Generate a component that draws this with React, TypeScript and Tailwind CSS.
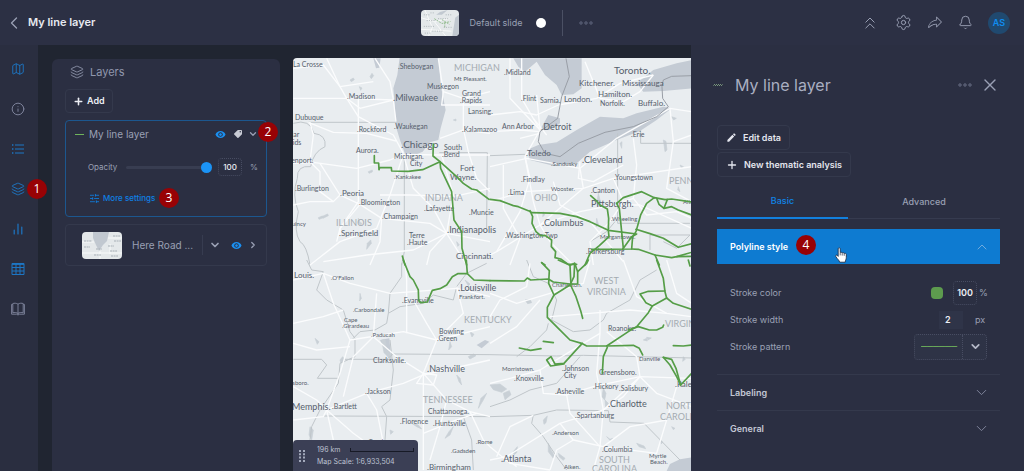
import { useState } from "react";
import {
  Bell,
  ChevronDown,
  ChevronLeft,
  ChevronRight,
  ChevronUp,
  ChevronsUp,
  Info,
  Layers,
  Map as MapIcon,
  Plus,
  Settings,
  SlidersHorizontal,
  X,
} from "lucide-react";
import { FaTag } from "react-icons/fa";
import { MdEdit, MdVisibility } from "react-icons/md";
import { PiShareFatLight } from "react-icons/pi";

type Label = [text: string, x: number, y: number, size: number, dot?: "l" | "r"];

const cities: Label[] = [
  ["La Crosse", 293, 67, 7],
  ["Sheboygan", 400, 69, 7, "l"],
  ["Mt Pleasant", 454, 81, 6, "r"],
  ["Muskegon", 427, 89, 7],
  ["Madison", 349, 99, 7, "l"],
  ["Milwaukee", 395, 101, 9, "l"],
  ["Grand", 462, 96, 7],
  ["Rapids", 462, 103, 7, "l"],
  ["Lansing", 468, 114, 7, "r"],
  ["Dubuque", 295, 120, 7],
  ["Waukegan", 396, 129, 7, "l"],
  ["Rockford", 359, 132, 7, "l"],
  ["Kalamazoo", 464, 132, 7, "l"],
  ["Cedar", 281, 137, 7],
  ["Rapids", 281, 145, 7],
  ["Chicago", 403, 148, 10, "l"],
  ["South", 444, 150, 7],
  ["Bend", 444, 157, 7, "l"],
  ["Aurora", 356, 153, 7, "r"],
  ["Michigan", 394, 159, 7, "r"],
  ["City", 410, 166, 7],
  ["Davenport", 279, 163, 7, "r"],
  ["Fort", 460, 171, 8],
  ["Wayne", 450, 180, 8, "r"],
  ["Kankakee", 396, 179, 6, "l"],
  ["Burlington", 297, 191, 7, "l"],
  ["Peoria", 342, 196, 8, "l"],
  ["Bloomington", 361, 205, 7, "l"],
  ["Lafayette", 426, 211, 7, "l"],
  ["Muncie", 471, 215, 7, "l"],
  ["Champaign", 384, 219, 7, "l"],
  ["Quincy", 287, 226, 6],
  ["Springfield", 341, 236, 8, "l"],
  ["Indianapolis", 449, 233, 9, "l"],
  ["Terre", 409, 238, 7],
  ["Haute", 409, 245, 7, "l"],
  ["Cincinnati", 456, 259, 8, "r"],
  ["Midland", 506, 75, 7, "l"],
  ["Toronto", 614, 74, 10, "r"],
  ["Kitchener", 579, 86, 8, "r"],
  ["Mississauga", 622, 86, 8],
  ["Hamilton", 598, 97, 8, "r"],
  ["Flint", 523, 101, 7, "l"],
  ["Sarnia", 540, 103, 7, "r"],
  ["London", 564, 102, 8, "r"],
  ["Norfolk", 600, 106, 7, "r"],
  ["Buffalo", 638, 106, 8, "r"],
  ["Ann Arbor", 502, 129, 7],
  ["Detroit", 543, 130, 9, "l"],
  ["Erie", 633, 137, 7, "l"],
  ["Toledo", 528, 156, 8, "l"],
  ["Sandusky", 553, 166, 6, "l"],
  ["Cleveland", 584, 163, 9, "l"],
  ["Findlay", 523, 182, 7, "l"],
  ["Youngstown", 616, 180, 7, "l"],
  ["Wooster", 551, 191, 6, "r"],
  ["Canton", 593, 193, 7, "l"],
  ["Lima", 510, 195, 7, "l"],
  ["Pittsburgh", 591, 207, 9, "r"],
  ["Wheeling", 613, 221, 6, "l"],
  ["Columbus", 544, 226, 9, "l"],
  ["Altoona", 683, 204, 6],
  ["Washington Twp", 507, 238, 7, "l"],
  ["Morgantown", 600, 239, 6, "r"],
  ["Parkersburg", 588, 254, 7, "l"],
  ["St Louis", 285, 278, 8, "r"],
  ["O'Fallon", 333, 280, 6, "l"],
  ["Louisville", 460, 291, 9, "l"],
  ["Frankfort", 459, 299, 6, "r"],
  ["Evansville", 404, 303, 7, "l"],
  ["Carbondale", 355, 312, 6, "l"],
  ["Cape", 344, 322, 6],
  ["Girardeau", 344, 328, 6, "l"],
  ["Paducah", 373, 337, 6, "l"],
  ["Bowling", 439, 334, 7],
  ["Green", 439, 341, 7, "l"],
  ["Clarksville", 373, 363, 7, "r"],
  ["Nashville", 429, 372, 9, "l"],
  ["Jonesboro", 280, 385, 6, "r"],
  ["Jackson", 367, 394, 7, "l"],
  ["Memphis", 292, 410, 9, "r"],
  ["Bartlett", 334, 409, 7, "l"],
  ["Chattanooga", 428, 414, 7, "r"],
  ["Florence", 402, 424, 7, "l"],
  ["Huntsville", 435, 426, 7, "l"],
  ["Tupelo", 369, 443, 6],
  ["Rome", 478, 444, 6, "l"],
  ["Gadsden", 453, 453, 6, "l"],
  ["Birmingham", 429, 470, 8, "l"],
  ["Charleston", 552, 287, 6, "r"],
  ["Roanoke", 608, 331, 7, "r"],
  ["Danville", 639, 361, 6],
  ["Morristown", 502, 371, 6, "r"],
  ["Johnson", 564, 371, 7, "l"],
  ["City", 564, 378, 7],
  ["Greensboro", 599, 375, 7, "r"],
  ["Knoxville", 516, 381, 7, "l"],
  ["Hickory", 595, 389, 7, "l"],
  ["Salisbury", 621, 391, 7, "l"],
  ["Asheville", 557, 394, 7, "l"],
  ["Raleigh", 677, 387, 8, "l"],
  ["Charlotte", 610, 407, 9, "l"],
  ["Spartanburg", 577, 418, 7, "l"],
  ["Anderson", 554, 435, 6, "l"],
  ["Columbia", 604, 452, 7, "l"],
  ["Myrtle", 649, 458, 6],
  ["Beach", 650, 464, 6, "r"],
  ["Atlanta", 503, 462, 9, "l"],
  ["Aiken", 564, 469, 6, "r"],
];

const states: Label[] = [
  ["MICHIGAN", 454, 71, 9],
  ["INDIANA", 425, 201, 9],
  ["ILLINOIS", 336, 226, 9],
  ["OHIO", 534, 201, 9],
  ["PENNSYLVANIA", 669, 184, 9],
  ["WEST", 594, 284, 9],
  ["VIRGINIA", 587, 295, 9],
  ["KENTUCKY", 464, 323, 9],
  ["VIRGINIA", 665, 327, 9],
  ["TENNESSEE", 423, 403, 9],
  ["NORTH", 666, 409, 9],
  ["CAROLINA", 660, 420, 9],
  ["SOUTH", 599, 463, 9],
  ["CAROLINA", 592, 472, 9],
];

const quadrants = [
  {
    origin: "translate(290 55) scale(0.3333)",
    water: [
      "M330 0 L445 0 L452 90 L467 165 L452 220 L445 255 L420 262 L398 290 L380 298 L345 296 L330 255 L318 215 L314 150 L310 100 L322 60 Z",
      "M250 10 L272 10 L268 38 L258 40 Z",
    ],
    border: [
      "M55 202 L318 202",
      "M343 296 L343 590 L335 630",
      "M448 293 L592 293 L590 520",
      "M10 205 Q60 190 72 235 Q110 240 105 275 Q70 290 62 335 Q20 330 22 370 Q5 420 25 470 Q10 530 30 560 Q50 570 60 630",
    ],
    roads: [
      "M10 130 L170 130 L310 135 L318 200",
      "M110 10 L150 95 L170 130 L205 185 L310 240 L340 295",
      "M55 202 L130 232 L230 235 L318 258",
      "M10 325 L70 322 L200 340 L300 315 L340 298 L450 300 L600 300",
      "M60 202 L70 240 L60 320 L90 350 L90 410 L130 440",
      "M205 130 L205 440 L150 520 L140 560",
      "M90 325 L150 420 L210 448 L275 490 L420 505 L470 535 L600 560",
      "M340 298 L300 420 L260 520 L150 560 L60 630",
      "M340 298 L370 400 L430 460 L470 535 L530 630",
      "M470 535 L370 585 L230 600 L100 620",
      "M470 535 L490 420 L455 300",
      "M270 420 L360 420 L490 425 L600 400",
      "M445 10 L460 110 L455 150 L600 150",
      "M460 110 L520 130 L600 110",
      "M450 250 L520 225 L600 235",
      "M520 130 L520 220 L535 290 L560 370",
      "M255 10 L300 80 L310 135",
      "M10 40 L100 30 L150 95 L250 80",
      "M10 450 L60 440 L130 440 L150 420",
      "M210 448 L150 520 L150 540",
      "M275 490 L270 560 L240 630",
      "M560 370 L600 410",
      "M470 535 L420 590 L410 630",
      "M310 135 L210 160 L170 130",
    ],
    ponds: [
      "M180 75 l10 -6 l3 5 l-9 6 Z",
      "M208 95 l8 4 l-4 7 Z",
      "M240 65 l6 -10 l5 7 l-7 9 Z",
      "M95 485 l18 -8 l2 5 l-16 8 Z",
      "M232 565 l10 -10 l2 10 l-14 18 Z",
      "M85 488 l12 -5 l3 5 l-13 5 Z",
      "M205 490 l5 12 l6 3 l-3 5 l-8 -7 Z",
      "M490 195 l8 -3 l0 6 Z",
      "M500 560 l8 10 l-5 4 Z",
      "M235 350 l12 -5 l0 6 l-10 4 Z",
    ],
    lines: [
      "M253 302 L253 324 L266 324 L267 344 L269 338 L304 338 L305 348 L355 349 L398 344 L450 320 L452 340 L485 410 L492 495 L515 530 L516 580 L530 630",
      "M430 267 L429 303 L450 320 L500 365 L520 385 L545 402 L560 405 L597 433",
      "M345 630 L337 603",
    ],
  },
  {
    origin: "translate(490 55) scale(0.3333)",
    water: [
      "M70 10 L275 10 L275 100 L250 118 L215 120 L200 90 L165 60 L140 20 L105 50 L85 35 Z",
      "M150 225 L175 180 L210 190 L210 205 L180 225 Z",
      "M145 270 L200 262 L260 225 L330 185 L400 190 L440 175 L520 155 L545 160 L500 195 L450 228 L380 255 L300 290 L260 325 L190 332 L120 315 L110 285 Z",
      "M440 85 L490 45 L560 25 L605 15 L605 100 L520 108 L460 110 Z",
    ],
    border: [
      "M383 235 L383 450",
      "M452 225 L452 265 L605 265",
      "M0 302 L105 298",
      "M383 450 L383 505 L600 505",
      "M300 560 L350 530 L375 500",
      "M480 585 L480 540 L600 540",
      "M600 540 L560 580 L520 560",
    ],
    national:
      "M228 10 L238 65 L215 125 L203 190 L150 230 L145 260 L165 295 L210 305 L265 265 L345 232 L430 215 L500 185 L535 155 L518 130 L516 95 L520 75 L545 64 L605 62",
    roads: [
      "M0 180 L90 170 L140 180 L205 150 L320 130 L390 85 L490 60",
      "M95 10 L95 130 L150 225 L105 305",
      "M90 250 L150 235",
      "M0 335 L110 310 L270 340 L380 250 L540 160 L605 170",
      "M105 305 L120 370 L90 470 L20 590",
      "M270 340 L280 400 L150 510 L20 590 L0 600",
      "M0 440 L100 410 L280 400 L370 370 L605 335",
      "M370 370 L400 440 L360 500 L300 560 L310 630",
      "M150 510 L270 470 L370 450 L450 450 L605 520",
      "M150 510 L180 560 L250 630",
      "M430 250 L440 330 L430 430 L400 440",
      "M540 160 L550 260 L530 400 L605 440",
      "M285 20 L330 130 L400 140 L450 110 L490 60",
      "M0 230 L90 225 L150 230",
      "M60 10 L60 130 L150 225",
      "M270 320 L265 370 L310 380 L400 330",
      "M150 510 L130 440 L105 305",
      "M550 260 L605 240",
      "M40 330 L40 460 L90 550 L60 630",
      "M430 430 L470 480 L560 470 L605 490",
      "M190 380 L210 450 L300 500 L400 620",
      "M140 120 L150 225 M130 190 L170 240",
    ],
    ponds: [
      "M520 255 l8 4 l3 26 l-6 5 l-2 -15 Z",
      "M545 185 l14 5 l-8 5 Z",
      "M325 415 l5 20 l-6 22 l-3 -15 Z",
      "M390 265 l6 -5 l-1 20 Z",
      "M565 395 l5 15 l-7 -5 Z",
      "M320 490 l6 20 l-8 5 Z",
      "M570 330 l10 5 l-5 5 Z",
      "M160 470 l4 10 l-6 5 Z",
    ],
    lines: [
      "M0 433 L30 437 L70 452 L85 455 L115 467 L125 473 L210 475 L260 485 L300 500 L355 526 L440 537 L425 545 L398 583",
      "M120 467 L128 485 L126 505 L138 530 L152 542 L165 541 L185 555 L184 575 L197 590 L195 608 L212 612 L235 628 L260 628",
      "M302 422 L318 436 L330 450 L352 462 L356 490 L355 526 L357 545 L328 572 L300 595 L285 630",
      "M305 583 L425 582 L428 545 L438 530 L452 480 L470 445 L493 428 L525 434 L545 432 L605 441",
      "M380 445 L388 460 L400 580",
      "M380 445 L400 428 L455 410 L493 428",
      "M500 430 L507 448 L522 460 L532 434",
      "M522 460 L545 455 L565 465 L605 480",
      "M438 523 L480 536 L520 550 L565 577 L605 566",
      "M425 582 L445 583 L495 600 L545 608 L560 605 L605 592",
      "M495 600 L508 630",
      "M560 605 L605 604",
      "M155 623 L165 630",
    ],
  },
  {
    origin: "translate(290 260) scale(0.3333)",
    water: ["M560 255 L585 240 L598 245 L575 265 Z", "M270 240 L298 235 L304 300 L292 285 Z"],
    border: [
      "M50 0 L65 30 L100 35 L80 90 L110 120 L160 150 L180 215 L195 235 L195 290 L150 310 L145 370 L90 450 L65 500 L60 540",
      "M335 10 L335 50 L300 100 L295 160 L330 140 L400 130 L430 105 L490 120 L500 80 L530 40 L590 10",
      "M295 160 L290 190 L255 210 L210 215 L185 240",
      "M10 298 L95 298 L110 315 L82 355 L145 355",
      "M165 298 L290 298 L310 282 L600 284",
      "M100 468 L600 470",
      "M290 470 L285 540",
      "M300 240 L310 330 L300 420 L275 440 L290 470",
      "M520 470 L545 540 L550 630",
    ],
    roads: [
      "M10 60 L100 40 L180 70 L300 100 L500 85 L600 110",
      "M100 40 L130 130 L180 240 L150 340 L110 450 L130 540 L240 630",
      "M250 230 L320 290 L400 340 L470 420 L540 455 L600 470",
      "M110 450 L230 400 L340 370 L400 345 L600 300",
      "M370 120 L410 190 L440 240 L400 340 L400 520 L400 630",
      "M180 240 L340 215 L440 240 L520 160 L500 80",
      "M345 0 L350 60 L350 220",
      "M10 190 L100 170 L160 150",
      "M10 250 L80 270 L180 260",
      "M110 450 L190 520 L300 600 L380 630",
      "M440 240 L600 200",
      "M260 100 L250 230 L190 290 L160 410",
      "M10 480 L100 470 L110 450",
      "M400 520 L500 480 L560 460",
      "M470 420 L450 500 L420 600",
      "M10 380 L80 420 L110 450",
      "M230 400 L260 450 L290 600",
      "M400 340 L380 370 L430 375 L440 345 Z",
      "M540 455 L580 540 L600 560",
    ],
    ponds: [
      "M275 240 l10 -2 l5 30 l12 15 l2 20 l-12 -15 l-10 -10 Z",
      "M480 245 l5 15 l-9 10 Z",
      "M535 290 l15 -8 l8 5 l-18 10 Z",
      "M500 345 l10 10 l5 20 l-8 -10 Z",
      "M365 490 l20 5 l10 12 l-15 -7 Z",
      "M590 400 l-10 20 l-15 25 l8 -30 Z",
      "M490 500 l-10 25 l-15 10 l12 -20 Z",
      "M75 235 l12 10 l-5 8 Z",
      "M210 100 l4 15 l-5 8 Z",
      "M525 60 l15 12 l-5 5 Z",
      "M60 500 l10 10 l-5 30 l-8 -15 Z",
      "M150 300 l8 -10 l5 8 l-10 12 Z",
      "M300 510 l10 5 l-8 8 Z",
      "M540 215 l12 8 l-6 8 Z",
    ],
    lines: [
      "M340 0 L360 50 L370 60 L385 90 L386 122 L392 128 L412 126 L427 91 L450 86 L470 75 L487 50 L503 41 L532 41 L552 60 L600 62",
      "M529 0 L532 41",
    ],
  },
  {
    origin: "translate(490 260) scale(0.3333)",
    water: ["M530 633 L540 612 L570 598 L605 592 L605 633 Z"],
    border: [
      "M0 284 L200 288 L280 286 L605 294",
      "M0 470 L130 466 L200 450 L355 452 L360 486 L462 490 L570 600",
      "M130 466 L125 490 L160 530 L200 590 L230 630",
      "M110 0 L130 50 L175 70 L200 120 L185 180 L250 215 L300 210 L340 180 L350 160 L420 120 L450 60 L500 30",
      "M175 190 L170 210 L120 260 L80 290",
      "M270 290 L200 370 L120 390 L60 420 L0 440",
    ],
    roads: [
      "M0 100 L80 130 L180 100 L280 70 L300 0",
      "M0 370 L80 350 L150 330 L280 250 L330 220",
      "M330 150 L330 220 L320 340 L340 450 L330 560 L310 630",
      "M150 330 L160 400 L230 405 L310 380 L450 350 L605 355",
      "M0 600 L50 590 L210 490 L340 450 L450 350",
      "M180 170 L300 160 L420 150 L530 160",
      "M40 590 L80 620 M0 560 L60 610 L180 630",
      "M340 560 L500 580 L530 480 L560 380",
      "M230 405 L240 460 L330 560",
      "M400 0 L440 110 L530 160 L605 170",
      "M120 10 L110 80 L30 120 L0 170",
      "M340 450 L400 410 L450 350 L440 290 L350 215",
      "M0 250 L80 200 L150 120",
      "M450 350 L500 400 L605 440",
      "M210 490 L250 540 L340 560 L420 500 L530 480",
      "M530 0 L560 100 L605 130",
      "M20 590 L60 500 L130 466",
      "M180 630 L200 570 L250 540",
    ],
    ponds: [
      "M340 385 l8 15 l-4 20 l-8 -10 Z",
      "M345 420 l10 10 l-8 14 Z",
      "M460 240 l10 -5 l2 8 Z",
      "M470 232 l14 2 l-10 6 Z",
      "M0 375 l30 -3 l20 15 l-15 10 l-25 -8 Z",
      "M40 400 l18 -8 l5 12 l-18 15 Z",
      "M160 480 l12 -12 l-4 20 l-6 5 Z",
      "M175 550 l8 20 l12 20 l-5 5 l-15 -20 Z",
      "M70 575 l12 -15 l-2 18 l-8 6 Z",
      "M350 530 l10 8 l8 -3 l-6 8 Z",
      "M440 550 l22 8 l5 8 l-20 -6 Z",
      "M580 290 l6 8 l-8 6 Z",
      "M105 120 l15 -2 l5 10 l-12 3 Z",
      "M205 580 l20 15 l-5 6 l-12 -10 Z",
      "M545 500 l10 5 l-5 4 Z",
      "M510 540 l8 6 l-4 6 Z",
    ],
    lines: [
      "M0 62 L103 63 L112 54 L122 60 L175 57 L190 66 L240 72 L263 72 L263 35 L290 10 L295 0",
      "M155 8 L178 32 L176 70 L192 105 L172 142 L172 172 L205 205 L240 240 L275 250 L290 258 L350 258 L415 215 L440 200 L475 158 L487 138 L530 114 L550 130 L605 148",
      "M205 0 L240 16 L243 78 L258 110 L272 152 L278 175",
      "M240 16 L254 10 L252 50 L240 75 L192 105",
      "M254 10 L263 35",
      "M277 250 L260 268 L222 310 L195 312 L183 290 L170 300 L182 318 L222 312",
      "M350 258 L430 256 L448 265 L458 285",
      "M352 262 L340 290 L337 340",
      "M415 210 L445 200 L478 210 L500 210 L518 202 L521 195",
      "M500 0 L520 55 L525 95 L530 114",
      "M487 138 L468 128 L450 102 L475 94 L525 93",
      "M160 244 L190 248",
      "M88 264 L122 271 L153 266",
      "M550 257 L580 258 L605 255",
      "M520 292 L545 298 L558 325 L572 375 L605 340",
      "M520 292 L540 315 L560 350 L572 375",
      "M595 0 L600 18",
    ],
  },
];

function MapDrawing() {
  return (
    <svg
      className="absolute inset-0 h-full w-full"
      viewBox="293 58 398 413"
      preserveAspectRatio="xMinYMin slice"
      role="img"
      aria-label="Road map with line layer"
    >
      <rect x="280" y="50" width="430" height="430" fill="#e9edf0" />
      {quadrants.map((q) => (
        <g key={q.origin} transform={q.origin} fill="none" strokeLinejoin="round">
          {q.water.map((d) => (
            <path key={d} d={d} fill="#c4cbd4" />
          ))}
          {q.ponds.map((d) => (
            <path key={d} d={d} fill="#c9d0d6" stroke="#c9d0d6" strokeWidth="2" />
          ))}
          {q.border.map((d) => (
            <path key={d} d={d} stroke="#c0c6ca" strokeWidth="3" />
          ))}
          {q.roads.map((d) => (
            <path key={d} d={d} stroke="#fbfcfd" strokeWidth="4" />
          ))}
          {q.national && <path d={q.national} stroke="#999ea6" strokeWidth="3" />}
        </g>
      ))}
      <g className="font-['Lato','Liberation_Sans',sans-serif]">
        {states.map(([text, x, y, size]) => (
          <text key={text + x} x={x} y={y} fontSize={size} fill="#a4abb1">
            {text}
          </text>
        ))}
        {cities.map(([text, x, y, size, dot]) => (
          <text key={text + x} x={dot === "l" ? x - 2 : x} y={y} fontSize={size} fill="#56606c">
            {dot === "l" ? "." : ""}
            {text}
            {dot === "r" ? "." : ""}
          </text>
        ))}
      </g>
      {quadrants.map((q) => (
        <g key={q.origin} transform={q.origin} fill="none" strokeLinejoin="round">
          {q.lines.map((d) => (
            <path key={d} d={d} stroke="#559d47" strokeWidth="5" strokeLinecap="round" />
          ))}
        </g>
      ))}
    </svg>
  );
}

function Badge({ value, className }: { value: number; className: string }) {
  return (
    <span
      className={`absolute z-10 flex h-5 w-5 items-center justify-center rounded-full bg-[#980205] font-['Open_Sans',sans-serif] text-xs text-white ${className}`}
    >
      {value}
    </span>
  );
}

function Dots() {
  return (
    <svg viewBox="0 0 14 4" className="h-1 w-3.5" fill="none" stroke="currentColor">
      <circle cx="2" cy="2" r="1.2" />
      <circle cx="7" cy="2" r="1.2" />
      <circle cx="12" cy="2" r="1.2" />
    </svg>
  );
}

function ListIcon() {
  return (
    <svg viewBox="0 0 14 14" className="h-3.5 w-3.5" stroke="currentColor" fill="none">
      <path d="M4 3H13M4 7H13M4 11H13" />
      <path d="M1 3H2.4M1 7H2.4M1 11H2.4" strokeWidth="1.4" />
    </svg>
  );
}

function BarsIcon() {
  return (
    <svg viewBox="0 0 14 14" className="h-3.5 w-3.5" stroke="currentColor" fill="none" strokeLinecap="round">
      <path d="M3.2 8V12M7 2V12M10.8 5V12" strokeWidth="1.2" />
    </svg>
  );
}

function TableIcon() {
  return (
    <svg viewBox="0 0 14 14" className="h-3.5 w-3.5" stroke="currentColor" fill="none">
      <path d="M1 1.5H13V12.5H1Z" />
      <path d="M1 2H13" strokeWidth="1.8" />
      <path d="M1 5.5H13M1 9H13M5 2V12.5M9 2V12.5" />
    </svg>
  );
}

function BookIcon() {
  return (
    <svg viewBox="0 0 14 14" className="h-3.5 w-3.5" stroke="currentColor" fill="none" strokeLinejoin="round">
      <path
        d="M7 2.2C5.5 1 3 1 1.8 1.6V2.4H0.6V12.2H5.6L7 13L8.4 12.2H13.4V2.4H12.2V1.6C11 1 8.5 1 7 2.2ZM7 2.2V12.4M1.8 2.4V10.8C3.5 10.2 5.6 10.4 7 11.4C8.4 10.4 10.5 10.2 12.2 10.8V2.4"
        strokeWidth="0.9"
      />
    </svg>
  );
}

function SlideThumb({ className, zoomed }: { className: string; zoomed?: boolean }) {
  return (
    <svg viewBox="0 0 40 27" preserveAspectRatio="none" className={`rounded-sm ${className}`}>
      <rect width="40" height="27" fill="#e4e8ea" />
      {zoomed ? (
        <g>
          <path d="M11 0H27L25 9L21 13L17 19L14 13L11 6Z" fill="#c1c8d0" />
          <path d="M0 10H12M26 6H40M0 21H40M18 19V27M28 12V22" stroke="#f8fafa" fill="none" />
          <path
            d="M2 9H10M2 15H8M14 17H20M26 14H32M28 19H35M29 24H36M12 23H19M31 4H38M32 9H39"
            stroke="#a7afb6"
            strokeDasharray="2 0.6"
          />
        </g>
      ) : (
        <g>
          <path d="M36 8L40 5V27H33Z" fill="#c1c8d0" />
          <path d="M16 5L20 2L28 0L22 5Z" fill="#c1c8d0" />
          <path d="M0 8L14 12L30 9M4 0L12 18L8 27M14 12L26 27M0 20L32 22" stroke="#f9fafa" fill="none" />
          <path
            d="M3 5H9M6 11H16M3 17H14M12 22H24M18 9H30M24 18H33M4 24H10M10 3H14M26 5H32"
            stroke="#a9b1b6"
            strokeDasharray="1 1.4"
          />
          <path d="M14 9L22 14L31 12M22 10L30 15M25 13V19" stroke="#8fba8a" strokeDasharray="2 1" fill="none" />
        </g>
      )}
    </svg>
  );
}

function HandCursor() {
  return (
    <svg viewBox="0 0 12 16" className="pointer-events-none absolute top-[18px] left-[118px] h-4 w-3">
      <path
        d="M3.2 9.4V1.8C3.2 0.4 5.2 0.4 5.2 1.8V5.6C5.8 5 7 5.2 7.2 6C7.8 5.4 9 5.7 9.2 6.5C10 6 11.3 6.4 11.3 7.6V10.5C11.3 12.3 10.4 13 10.2 15.2H4.6C4.4 13.4 2.6 12.4 0.9 9.7C0.2 8.4 1.4 7.6 2.3 8.4Z"
        fill="#fff"
        stroke="#16233a"
        strokeWidth="0.8"
      />
      <path d="M5.2 5.8V8.4M7.2 6.2V8.6M9.2 6.8V8.8" stroke="#16233a" strokeWidth="0.7" />
    </svg>
  );
}

const navItems = [
  { name: "Maps", active: true, icon: <MapIcon size={14} strokeWidth={1.6} /> },
  { name: "Info", active: false, icon: <Info size={14} strokeWidth={1.6} /> },
  { name: "Legend", active: true, icon: <ListIcon /> },
  { name: "Layers", active: true, icon: <Layers size={14} strokeWidth={1.6} />, badge: 1 },
  { name: "Charts", active: true, icon: <BarsIcon /> },
  { name: "Table", active: true, icon: <TableIcon /> },
  { name: "Story", active: false, icon: <BookIcon /> },
];

const sections = ["Labeling", "General"];

export default function App() {
  const [opacity, setOpacity] = useState(100);
  const [strokeOpacity, setStrokeOpacity] = useState("100");
  const [strokeWidth, setStrokeWidth] = useState("2");
  const [tab, setTab] = useState("Basic");

  return (
    <div className="flex min-h-screen flex-col bg-[#202531] font-['Inter',sans-serif] text-[9px] text-[#9aa0b4]">
      <header className="flex h-[45px] shrink-0 items-center bg-[#2c3044] pr-3.5 pl-1">
        <div className="flex flex-1 items-center gap-1">
          <button aria-label="Back">
            <ChevronLeft size={20} strokeWidth={1.6} />
          </button>
          <h1 className="text-[11px] font-semibold text-[#e8eaf0]">My line layer</h1>
        </div>
        <div className="flex items-center">
          <SlideThumb className="h-[26px] w-[38px]" />
          <span className="ml-[11px]">Default slide</span>
          <span className="ml-3.5 h-2.5 w-2.5 rounded-full bg-white" />
          <span className="ml-4 h-[26px] w-px bg-[#4b5064]" />
          <button aria-label="More slide options" className="ml-4 text-[#626880]">
            <Dots />
          </button>
        </div>
        <div className="flex flex-1 items-center justify-end gap-[15px]">
          <button aria-label="Collapse">
            <ChevronsUp size={20} strokeWidth={1.2} />
          </button>
          <button aria-label="Settings">
            <Settings size={17} strokeWidth={1.4} />
          </button>
          <button aria-label="Share">
            <PiShareFatLight size={16} />
          </button>
          <button aria-label="Notifications">
            <Bell size={15} strokeWidth={1.5} />
          </button>
          <button className="h-[22px] w-[22px] rounded-full bg-[#20496f] font-semibold text-[#0f8cf0]">AS</button>
        </div>
      </header>

      <div className="flex flex-1">
        <nav className="flex w-[38px] shrink-0 flex-col bg-[#2a2e40] pt-1" aria-label="Tools">
          {navItems.map((item) => (
            <div key={item.name} className="relative flex h-10 items-center justify-center pr-0.5">
              <button aria-label={item.name} className={item.active ? "text-[#1d76c4]" : "text-[#8288a0]"}>
                {item.icon}
              </button>
              {item.badge && <Badge value={item.badge} className="top-2.5 left-[27px]" />}
            </div>
          ))}
        </nav>

        <section className="mt-3.5 ml-3.5 flex w-[228px] shrink-0 flex-col rounded-t-md bg-[#2b2f42] px-[13px]">
          <h2 className="flex h-[26px] items-center gap-1.5 pl-[5px] text-[11px] text-[#9097ad]">
            <Layers size={14} strokeWidth={1.5} />
            Layers
          </h2>
          <button className="mt-1 flex h-6 items-center gap-[3px] self-start rounded border border-[#34394c] px-[7px] font-semibold text-[#eceef4]">
            <Plus size={11} strokeWidth={3.4} />
            Add
          </button>
          <article className="relative mt-[7px] rounded border border-[#1c578f] pr-2 pb-2 pl-[9px]">
            <div className="flex h-[26px] items-center">
              <span className="h-px w-[9px] bg-[#6fb45c]" />
              <h3 className="ml-[5px] flex-1 text-[10px]">My line layer</h3>
              <button aria-label="Toggle visibility" className="text-[#1a8ff0]">
                <MdVisibility size={11} />
              </button>
              <button aria-label="Tag" className="ml-2 text-[#c8cbd4]">
                <FaTag size={8} className="-scale-x-100" />
              </button>
              <button aria-label="Collapse layer" className="ml-1.5">
                <ChevronDown size={10} strokeWidth={3} />
              </button>
            </div>
            <Badge value={2} className="top-px -right-3" />
            <div className="mt-[11px] flex h-[18px] items-center pl-[13px]">
              <label htmlFor="opacity" className="w-[38px] text-[8px]">
                Opacity
              </label>
              <input
                id="opacity"
                type="range"
                min={0}
                max={100}
                value={opacity}
                onChange={(e) => setOpacity(Number(e.target.value))}
                className="h-[3px] w-[86px] appearance-none rounded bg-[#383d51] [&::-webkit-slider-thumb]:h-[11px] [&::-webkit-slider-thumb]:w-[11px] [&::-webkit-slider-thumb]:appearance-none [&::-webkit-slider-thumb]:rounded-full [&::-webkit-slider-thumb]:bg-[#1b93f5]"
              />
              <input
                aria-label="Opacity value"
                value={opacity}
                onChange={(e) => setOpacity(Number(e.target.value) || 0)}
                className="ml-1.5 h-[18px] w-6 rounded border border-dotted border-[#484d62] bg-transparent text-center text-[8px] font-medium text-[#eceef4]"
              />
              <span className="ml-2 text-[8px]">%</span>
            </div>
            <div className="mt-3 flex h-5 items-center pl-3.5">
              <button className="flex items-center gap-[3px] text-[8px] font-medium text-[#0f80e4]">
                <SlidersHorizontal size={11} strokeWidth={1.8} />
                More settings
              </button>
              <Badge value={3} className="left-[93px]" />
            </div>
          </article>
          <article className="mt-[7px] flex h-[42px] items-center rounded border border-[#34394c] pr-2 pl-4">
            <SlideThumb zoomed className="h-[27px] w-10" />
            <h3 className="ml-2.5 flex-1 text-[10px]">Here Road ...</h3>
            <span className="h-5 w-px bg-[#373c50]" />
            <button aria-label="Layer options" className="ml-1.5">
              <ChevronDown size={12} strokeWidth={3.4} />
            </button>
            <button aria-label="Toggle basemap visibility" className="ml-2.5 text-[#1a8ff0]">
              <MdVisibility size={11} />
            </button>
            <button aria-label="Expand layer" className="ml-1.5">
              <ChevronRight size={10} strokeWidth={3} />
            </button>
          </article>
        </section>

        <main className="relative mt-[13px] ml-[13px] min-h-[412px] flex-1 overflow-hidden rounded-tl">
          <MapDrawing />
          <div className="absolute bottom-0 left-0 flex h-[31px] w-[125px] items-center rounded-t bg-[#3b3f55] pl-1.5 text-[7px] leading-3 text-[#bdc2d2]">
            <svg viewBox="0 0 6 12" className="h-3 w-1.5" fill="#a3a9bb">
              <path d="M0 0h2v2H0zM4 0h2v2H4zM0 3.3h2v2H0zM4 3.3h2v2H4zM0 6.6h2v2H0zM4 6.6h2v2H4zM0 10h2v2H0zM4 10h2v2H4z" />
            </svg>
            <div className="ml-3 flex-1 pr-1">
              <div className="flex items-center justify-between">
                <span>196 km</span>
                <span className="h-1 w-16 border border-t-0 border-[#171a26]" />
              </div>
              <div>Map Scale: 1:6,933,504</div>
            </div>
          </div>
        </main>

        <aside className="w-[333px] shrink-0 bg-[#2b2f42] pr-6 pl-[26px]">
          <div className="flex h-20 items-center">
            <svg viewBox="0 0 10 4" className="-ml-1 h-1 w-2.5" fill="none" stroke="#a5cf9c" strokeWidth="0.8">
              <path d="M0.5 2.5L1.5 1.5L2.5 2.5L3.5 1.5L4.5 2.5L5.5 1.5L6.5 2.5L7.5 1.5L8.5 2.5L9.5 1.5" />
            </svg>
            <h2 className="ml-3 flex-1 text-base text-[#a9aec1]">My line layer</h2>
            <button aria-label="More layer options" className="text-[#6b7188]">
              <Dots />
            </button>
            <button aria-label="Close" className="ml-2">
              <X size={20} strokeWidth={1.6} />
            </button>
          </div>
          <div className="flex flex-col items-start gap-0.5 font-semibold text-[#e4e6ee]">
            <button className="flex h-[25px] items-center gap-1.5 rounded border border-[#34394c] px-2">
              <MdEdit size={11} />
              Edit data
            </button>
            <button className="flex h-[25px] items-center gap-1.5 rounded border border-[#34394c] px-2">
              <Plus size={12} strokeWidth={2.6} />
              New thematic analysis
            </button>
          </div>
          <div role="tablist" className="mt-2 flex h-[34px] border-b border-[#363b4f] font-medium">
            {["Basic", "Advanced"].map((name) => (
              <button
                key={name}
                role="tab"
                aria-selected={tab === name}
                onClick={() => setTab(name)}
                className={
                  tab === name
                    ? "-mb-px w-[131px] border-b-2 border-[#1280dd] text-[#0f85e8]"
                    : "flex-1 text-[#9aa0b4]"
                }
              >
                {name}
              </button>
            ))}
          </div>
          <div className="relative mt-2.5">
            <button className="flex h-[35px] w-full items-center justify-between bg-[#0e7bd1] pr-2.5 pl-[13px] font-semibold text-white">
              Polyline style
              <ChevronUp size={16} strokeWidth={1.2} className="text-[#8cb7e0]" />
            </button>
            <Badge value={4} className="top-1.5 left-[79px]" />
            <HandCursor />
          </div>
          <div className="px-[13px] pt-[15px] pb-3.5">
            <div className="flex h-[27px] items-center">
              <label htmlFor="stroke-opacity" className="flex-1">
                Stroke color
              </label>
              <button aria-label="Pick stroke color" className="h-3 w-3 rounded bg-[#5d9b4e]" />
              <input
                id="stroke-opacity"
                value={strokeOpacity}
                onChange={(e) => setStrokeOpacity(e.target.value)}
                className="ml-2.5 h-6 w-6 rounded border border-dotted border-[#484d62] bg-transparent text-center font-semibold text-[#eceef4]"
              />
              <span className="ml-0.5 w-2">%</span>
            </div>
            <div className="flex h-[27px] items-center">
              <label htmlFor="stroke-width" className="flex-1">
                Stroke width
              </label>
              <input
                id="stroke-width"
                value={strokeWidth}
                onChange={(e) => setStrokeWidth(e.target.value)}
                className="h-[18px] w-6 bg-[#2f3448] pl-1.5 font-semibold text-[#eceef4]"
              />
              <span className="ml-3 w-3">px</span>
            </div>
            <div className="flex h-[27px] items-center">
              <label htmlFor="stroke-pattern" className="flex-1">
                Stroke pattern
              </label>
              <div className="flex h-[26px] w-[73px] items-center rounded border border-dotted border-[#484d62] bg-[#2e3346]">
                <select
                  id="stroke-pattern"
                  className="h-full w-12 appearance-none border-r border-dotted border-[#484d62] bg-transparent pl-1.5 font-['DejaVu_Sans_Mono',monospace] text-[10px] font-bold text-[#6fb45c]"
                >
                  <option>──────</option>
                </select>
                <ChevronDown size={13} strokeWidth={3.2} className="ml-1.5 text-[#b5b9c8]" />
              </div>
            </div>
          </div>
          {sections.map((name) => (
            <button
              key={name}
              className="flex h-9 w-full items-center justify-between border-t border-[#34394c] pr-2.5 pl-[13px] font-semibold text-[#c3c7d4]"
            >
              {name}
              <ChevronDown size={17} strokeWidth={1.4} className="text-[#7e849a]" />
            </button>
          ))}
        </aside>
      </div>
    </div>
  );
}
